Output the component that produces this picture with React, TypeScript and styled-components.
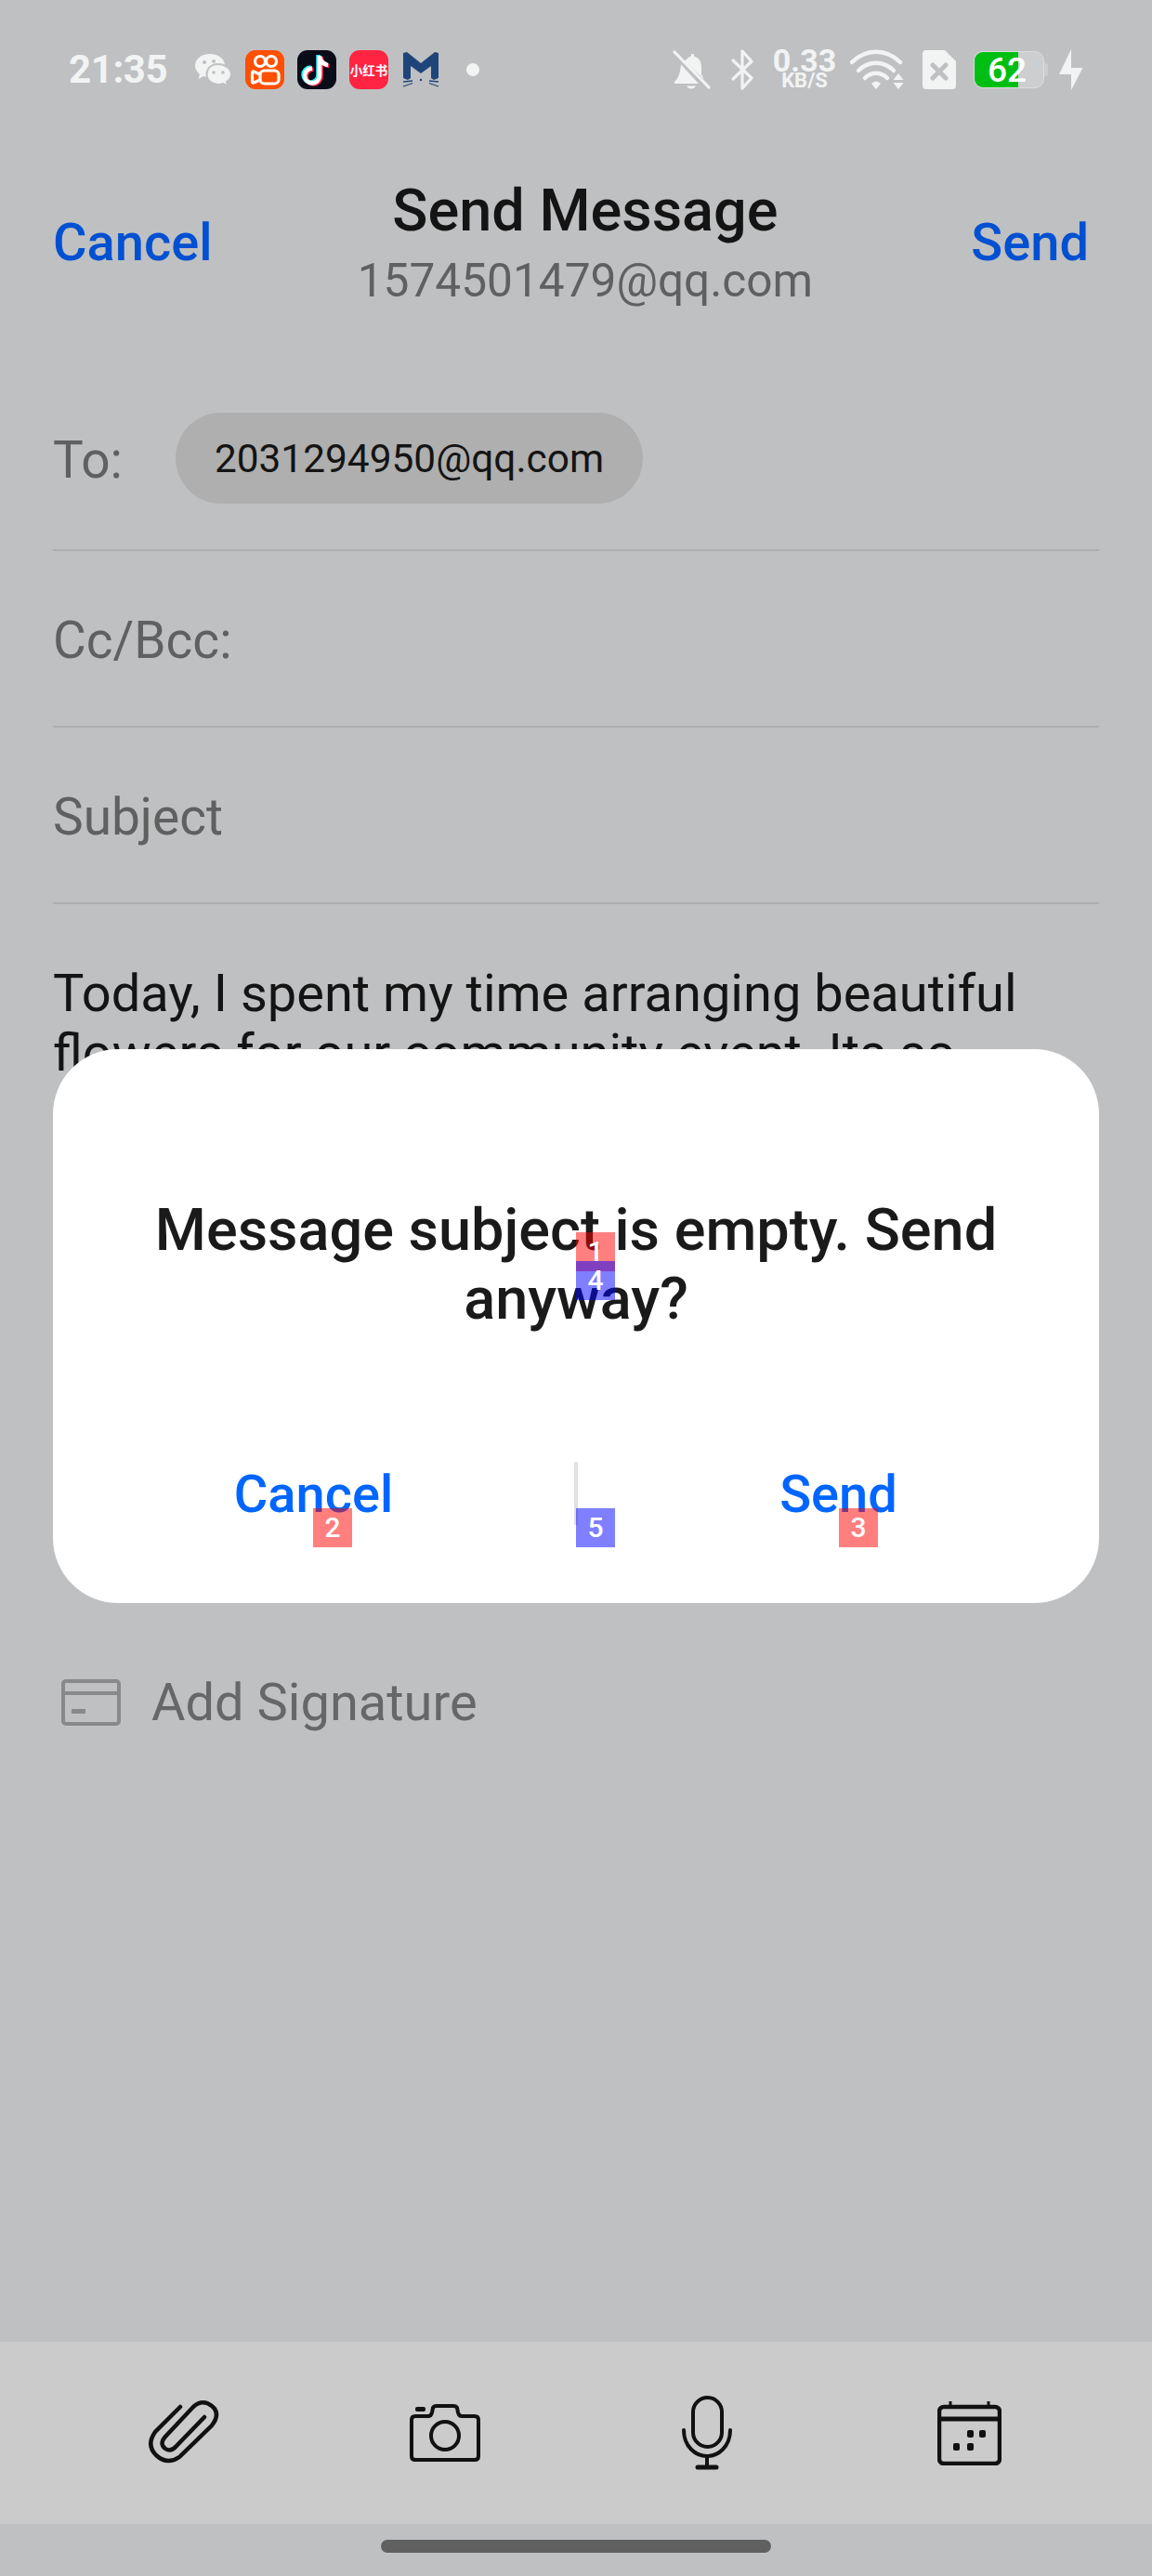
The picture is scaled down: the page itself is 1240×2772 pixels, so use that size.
import React from 'react';
import styled, { createGlobalStyle } from 'styled-components';

const Global = createGlobalStyle`
  html, body { margin: 0; padding: 0; background: #bfc0c2; }
  #root { width: 1240px; height: 2772px; }
  * { box-sizing: border-box; }
`;

const Page = styled.div`
  position: relative;
  width: 1240px;
  height: 2772px;
  overflow: hidden;
  background: #bfc0c2;
  font-family: Roboto, "Noto Sans CJK SC", sans-serif;
  display: flex;
  flex-direction: column;
`;

const StatusBar = styled.div`
  height: 148px;
  flex: none;
  display: flex;
  align-items: flex-start;
  justify-content: space-between;
  padding: 52px 74px 0 74px;
  color: #f2f3f3;
`;
const StatusGroup = styled.div`
  display: flex;
  align-items: center;
  height: 46px;
`;
const Clock = styled.div`
  font-size: 42px;
  font-weight: 700;
  line-height: 46px;
  width: 135px;
  letter-spacing: -0.4px;
`;
const AppIconBox = styled.div<{ $bg: string }>`
  width: 42px;
  height: 42px;
  border-radius: 11px;
  background: ${p => p.$bg};
  margin-left: 14px;
  display: flex;
  align-items: center;
  justify-content: center;
  overflow: hidden;
  svg { display: block; }
`;
const XhsText = styled.span`
  color: #fff;
  font-family: "Noto Sans CJK SC", sans-serif;
  font-weight: 700;
  font-size: 13.5px;
  white-space: nowrap;
`;
const Dot = styled.div`
  width: 14px;
  height: 14px;
  border-radius: 50%;
  background: #f2f3f3;
  margin-left: 29px;
`;
const Speed = styled.div`
  width: 70px;
  margin: -3px 14px 0 20px;
  text-align: center;
  font-weight: 700;
`;
const SpeedValue = styled.div`
  font-size: 34px;
  line-height: 26px;
`;
const SpeedUnit = styled.div`
  font-size: 22px;
  line-height: 18px;
`;
const Battery = styled.div`
  position: relative;
  width: 76px;
  height: 40px;
  margin-left: 19px;
  border-radius: 10px;
  background: #cdcecf;
  border: 1px solid #dcdddd;
  overflow: hidden;
  display: flex;
  align-items: center;
`;
const BatteryFill = styled.div<{ $pct: number }>`
  width: ${p => p.$pct}%;
  height: 100%;
  background: #00bf12;
`;
const BatteryText = styled.span`
  position: absolute;
  left: 14px;
  top: 0;
  line-height: 40px;
  font-size: 37px;
  font-weight: 500;
  color: #fff;
`;
const BatteryCap = styled.div`
  width: 4px;
  height: 14px;
  background: #cdcecf;
  border-radius: 0 3px 3px 0;
`;

const Header = styled.div`
  flex: none;
  height: 255px;
  display: flex;
  justify-content: space-between;
  padding: 43px 68px 0 57px;
`;
const HeaderAction = styled.div`
  font-size: 56px;
  font-weight: 500;
  line-height: 66px;
  margin-top: 37px;
  color: #0050d2;
`;
const HeaderCenter = styled.div`
  text-align: center;
  margin-right: 14px;
`;
const Title = styled.div`
  font-size: 63px;
  font-weight: 500;
  line-height: 72px;
  color: #141414;
`;
const Subtitle = styled.div`
  font-size: 49.6px;
  line-height: 58px;
  margin-top: 10px;
  color: #5f6060;
`;

const Field = styled.div<{ $first?: boolean }>`
  flex: none;
  height: 190px;
  margin: 0 57px;
  padding: ${p => (p.$first ? '0 0 8px' : '4px 0 0')};
  border-bottom: 2px solid #adaeae;
  display: flex;
  align-items: center;
  font-size: 55px;
  color: #5f6060;
`;
const FieldLabel = styled.div`
  width: 132px;
  margin-top: 3px;
`;
const Chip = styled.div`
  height: 98px;
  width: 503px;
  border-radius: 49px;
  background: #aeafae;
  color: #141414;
  font-size: 42.4px;
  display: flex;
  align-items: center;
  justify-content: center;
`;

const Body = styled.div`
  flex: none;
  height: 780px;
  padding: 64px 57px 0;
  font-size: 56px;
  line-height: 64px;
  color: #141414;
  overflow: hidden;
`;
const SignatureRow = styled.div`
  flex: none;
  display: flex;
  align-items: center;
  height: 60px;
  padding-left: 66px;
  margin-top: 49px;
  font-size: 56px;
  line-height: 64px;
  color: #666767;
  svg { margin-right: 33px; }
`;
const Spacer = styled.div`
  flex: 1;
`;
const Toolbar = styled.div`
  flex: none;
  height: 196px;
  background: #cbcbcb;
  display: grid;
  grid-template-columns: repeat(4, 1fr);
  padding: 0 55px;
  align-items: center;
  justify-items: center;
`;
const HomeArea = styled.div`
  flex: none;
  height: 56px;
  display: flex;
  justify-content: center;
  padding-top: 17px;
`;
const HomeBar = styled.div`
  width: 420px;
  height: 14px;
  border-radius: 7px;
  background: #606060;
`;

const Dialog = styled.div`
  position: absolute;
  left: 57px;
  top: 1129px;
  width: 1126px;
  height: 596px;
  border-radius: 70px;
  background: #fff;
  display: flex;
  flex-direction: column;
`;
const DialogText = styled.div`
  margin-top: 158px;
  padding: 0 90px;
  font-size: 63px;
  font-weight: 500;
  line-height: 74px;
  text-align: center;
  color: #1a1a1a;
`;
const DialogButtons = styled.div`
  margin-top: 136px;
  height: 68px;
  display: grid;
  grid-template-columns: 1fr 4px 1fr;
  align-items: center;
`;
const DialogButton = styled.div`
  font-size: 56px;
  font-weight: 500;
  line-height: 68px;
  padding-top: 3px;
  text-align: center;
  color: #0066ff;
`;
const DialogDivider = styled.div`
  height: 68px;
  background: #dfdfdf;
`;
const Badge = styled.div<{ $x: number; $y: number; $kind: 'red' | 'blue' }>`
  position: absolute;
  left: ${p => p.$x}px;
  top: ${p => p.$y}px;
  width: 42px;
  height: 42px;
  background: ${p => (p.$kind === 'red' ? 'rgba(255,0,0,.5)' : 'rgba(0,0,255,.5)')};
  color: #fff;
  font-family: Roboto, sans-serif;
  font-weight: 500;
  font-size: 30px;
  line-height: 42px;
  text-align: center;
`;

const WeChat = () => (
  <svg width="40" height="36" viewBox="0 0 40 36" style={{ marginRight: 1 }}>
    <path d="M17 1C8 1 1 6.500 1 13.500 1 17.500 3 20.500 6 23L4.500 28 10 25C12 25.700 14 26 17 26 26 26 33 20 33 13.500 33 6.500 26 1 17 1Z" fill="#f2f3f3" />
    <path d="M26 12C17 12 13.500 18 13.500 23 13.500 29 19 34 26 34 28 34 30 33.500 31 33L36 35.500 35 31C38 29 40 26 40 23 40 17 33 12 26 12Z" fill="#f2f3f3" stroke="#bfc0c2" strokeWidth="2" />
    <circle cx="21" cy="21" r="1.800" fill="#bfc0c2" />
    <circle cx="31" cy="21" r="1.800" fill="#bfc0c2" />
    <circle cx="11" cy="10" r="2" fill="#bfc0c2" />
    <circle cx="21" cy="9" r="2" fill="#bfc0c2" />
  </svg>
);

const Kuaishou = () => (
  <svg width="42" height="42" viewBox="0 0 42 42" fill="none" stroke="#fff" strokeWidth="3.200">
    <circle cx="16" cy="12" r="5.500" />
    <circle cx="28" cy="12" r="5.500" />
    <rect x="16" y="22" width="20" height="14" rx="4.500" />
    <path d="M16 26L9 23Q7.500 22.500 7.500 24.500V33.500Q7.500 35.500 9 35L16 32" />
  </svg>
);

const TikTok = () => {
  const note = 'M24 6V27.500A8 8 0 1 1 16 19.500M24 7Q25.500 15 33 16';
  return (
    <svg width="42" height="42" viewBox="0 0 42 42" fill="none" strokeWidth="4.500">
      <path d={note} stroke="#25f4ee" transform="translate(-1.500 -1)" />
      <path d={note} stroke="#fe2c55" transform="translate(1.500 1)" />
      <path d={note} stroke="#fff" />
    </svg>
  );
};

const CatM = () => (
  <svg width="40" height="38" viewBox="0 0 40 38" style={{ marginLeft: 15 }}>
    <path d="M1 1L5 0 20 12 35 0 39 1V28L34 30 31 28V15L20 23 9 15V28L6 30 1 28Z" fill="#1e4479" />
    <circle cx="20" cy="30" r="1.200" fill="#1e4479" />
    <path d="M1 32L11 31M1 37L11 33.500M39 32L29 31M39 37L29 33.500" stroke="#1e4479" strokeWidth="1.300" />
  </svg>
);

const BellOff = () => (
  <svg width="42" height="42" viewBox="0 0 42 42" style={{ marginRight: 21 }}>
    <path d="M14 11C16 8.500 18 7 20 6.500V4H23V6.500C28 8 31 12 31 18V26L34.500 32 12 11Z" fill="#f2f3f3" />
    <path d="M9 15.500L28 36H3C2 36 1.500 34.500 2.500 33.500 7 29 8 24 9 15.500Z" fill="#f2f3f3" />
    <path d="M15 38.500H25Q23.500 41.500 20 41.500 16.500 41.500 15 38.500Z" fill="#f2f3f3" />
    <path d="M2 2L39 40" stroke="#f2f3f3" strokeWidth="3.200" strokeLinecap="round" />
  </svg>
);

const Bluetooth = () => (
  <svg width="24" height="44" viewBox="0 0 24 44" fill="none" stroke="#f2f3f3" strokeWidth="3.200" strokeLinejoin="round" strokeLinecap="round">
    <path d="M2 12L22 31 12 42V2L22 13 2 32" />
  </svg>
);

const Wifi = () => (
  <svg width="62" height="44" viewBox="0 0 62 44">
    <g fill="none" stroke="#f2f3f3" strokeWidth="4.500" strokeLinecap="round">
      <path d="M2 14C17 -1 39 -1 54 14" />
      <path d="M9 23C20 12 36 12 47 23" />
      <path d="M16 31C23 24 33 24 40 31" />
    </g>
    <path d="M23 37C26 33.500 30 33.500 33 37L28 43Z" fill="#f2f3f3" />
    <path d="M52 26L57.500 33H46.500Z M46.500 36H57.500L52 43Z" fill="#f2f3f3" />
  </svg>
);

const Sim = () => (
  <svg width="36" height="42" viewBox="0 0 36 42" style={{ marginLeft: 16 }}>
    <path d="M4 0H24L36 12V38Q36 42 32 42H4Q0 42 0 38V4Q0 0 4 0Z" fill="#f2f3f3" />
    <path d="M11 16L25 30M25 16L11 30" stroke="#bfc0c2" strokeWidth="5" strokeLinecap="round" />
  </svg>
);

const Bolt = () => (
  <svg width="26" height="44" viewBox="0 0 26 44" style={{ marginLeft: 12 }}>
    <path d="M13 0V20H25.500L13 44V27H0Z" fill="#f2f3f3" />
  </svg>
);

const SignatureIcon = () => (
  <svg width="64" height="50" viewBox="0 0 64 50" fill="none" stroke="#888989" strokeWidth="4">
    <rect x="2" y="2" width="60" height="46" rx="3" />
    <path d="M2 15H62" />
    <path d="M11 34.500H26" strokeWidth="5" />
  </svg>
);

const Clip = () => (
  <svg width="83" height="74" viewBox="-3 -3 83 74" fill="none" stroke="#111" strokeWidth="4.500" strokeLinecap="round">
    <path d="M36 6L9 33Q-1 47 10 58 22 69 35 60L70 26Q80 13 70 5 60 -3 50 6L20 38Q13 46 20 51 26 55 32 48L62 17" />
  </svg>
);

const Camera = () => (
  <svg width="76" height="62" viewBox="0 0 76 62" fill="none" stroke="#111" strokeWidth="4">
    <path d="M6 13H20Q23 13 24 9L25 4Q26 2 29 2H47Q50 2 51 4L52 9Q53 13 56 13H70Q74 13 74 17V56Q74 60 70 60H6Q2 60 2 56V17Q2 13 6 13Z" />
    <circle cx="38" cy="34" r="15" />
    <rect x="6" y="3" width="11" height="5" rx="2" fill="#111" stroke="none" />
  </svg>
);

const Mic = () => (
  <svg width="54" height="80" viewBox="0 0 54 80" fill="none" stroke="#111" strokeWidth="4" strokeLinecap="round">
    <rect x="12" y="2" width="31" height="53" rx="15.500" />
    <path d="M2 37C2 55 15 65 27 65 39 65 52 55 52 37" />
    <path d="M27 65V76" />
    <path d="M17 77H37" strokeWidth="5" />
  </svg>
);

const Calendar = () => (
  <svg width="69" height="69" viewBox="0 0 69 69" fill="none" stroke="#111" strokeWidth="4.500">
    <rect x="2" y="6" width="65" height="61" rx="5" />
    <path d="M2 19H67" strokeWidth="5" />
    <path d="M14 0V6M55 0V6" strokeWidth="3" />
    <g fill="#111" stroke="none">
      <rect x="32" y="31" width="7" height="8" rx="2" />
      <rect x="45" y="31" width="7" height="8" rx="2" />
      <rect x="17" y="45" width="7" height="8" rx="2" />
      <rect x="32" y="45" width="7" height="8" rx="2" />
    </g>
  </svg>
);

export default function App() {
  return (
    <Page>
      <Global />
      <StatusBar>
        <StatusGroup>
          <Clock>21:35</Clock>
          <WeChat />
          <AppIconBox $bg="#ff4f00"><Kuaishou /></AppIconBox>
          <AppIconBox $bg="#0a0c18"><TikTok /></AppIconBox>
          <AppIconBox $bg="#ff2442"><XhsText>小红书</XhsText></AppIconBox>
          <CatM />
          <Dot />
        </StatusGroup>
        <StatusGroup>
          <BellOff />
          <Bluetooth />
          <Speed>
            <SpeedValue>0.33</SpeedValue>
            <SpeedUnit>KB/S</SpeedUnit>
          </Speed>
          <Wifi />
          <Sim />
          <Battery>
            <BatteryFill $pct={64} />
            <BatteryText>62</BatteryText>
          </Battery>
          <BatteryCap />
          <Bolt />
        </StatusGroup>
      </StatusBar>

      <Header>
        <HeaderAction>Cancel</HeaderAction>
        <HeaderCenter>
          <Title>Send Message</Title>
          <Subtitle>1574501479@qq.com</Subtitle>
        </HeaderCenter>
        <HeaderAction>Send</HeaderAction>
      </Header>

      <Field $first>
        <FieldLabel>To:</FieldLabel>
        <Chip>2031294950@qq.com</Chip>
      </Field>
      <Field>Cc/Bcc:</Field>
      <Field>Subject</Field>

      <Body>
        Today, I spent my time arranging beautiful flowers for our community event. Its so
      </Body>

      <SignatureRow>
        <SignatureIcon />
        Add Signature
      </SignatureRow>
      <Spacer />
      <Toolbar>
        <Clip />
        <Camera />
        <Mic />
        <Calendar />
      </Toolbar>
      <HomeArea>
        <HomeBar />
      </HomeArea>

      <Dialog>
        <DialogText>Message subject is empty. Send anyway?</DialogText>
        <DialogButtons>
          <DialogButton>Cancel</DialogButton>
          <DialogDivider />
          <DialogButton>Send</DialogButton>
        </DialogButtons>
        <Badge $kind="red" $x={563} $y={197}>1</Badge>
        <Badge $kind="blue" $x={563} $y={228}>4</Badge>
        <Badge $kind="red" $x={280} $y={494}>2</Badge>
        <Badge $kind="red" $x={846} $y={494}>3</Badge>
        <Badge $kind="blue" $x={563} $y={494}>5</Badge>
      </Dialog>
    </Page>
  );
}
